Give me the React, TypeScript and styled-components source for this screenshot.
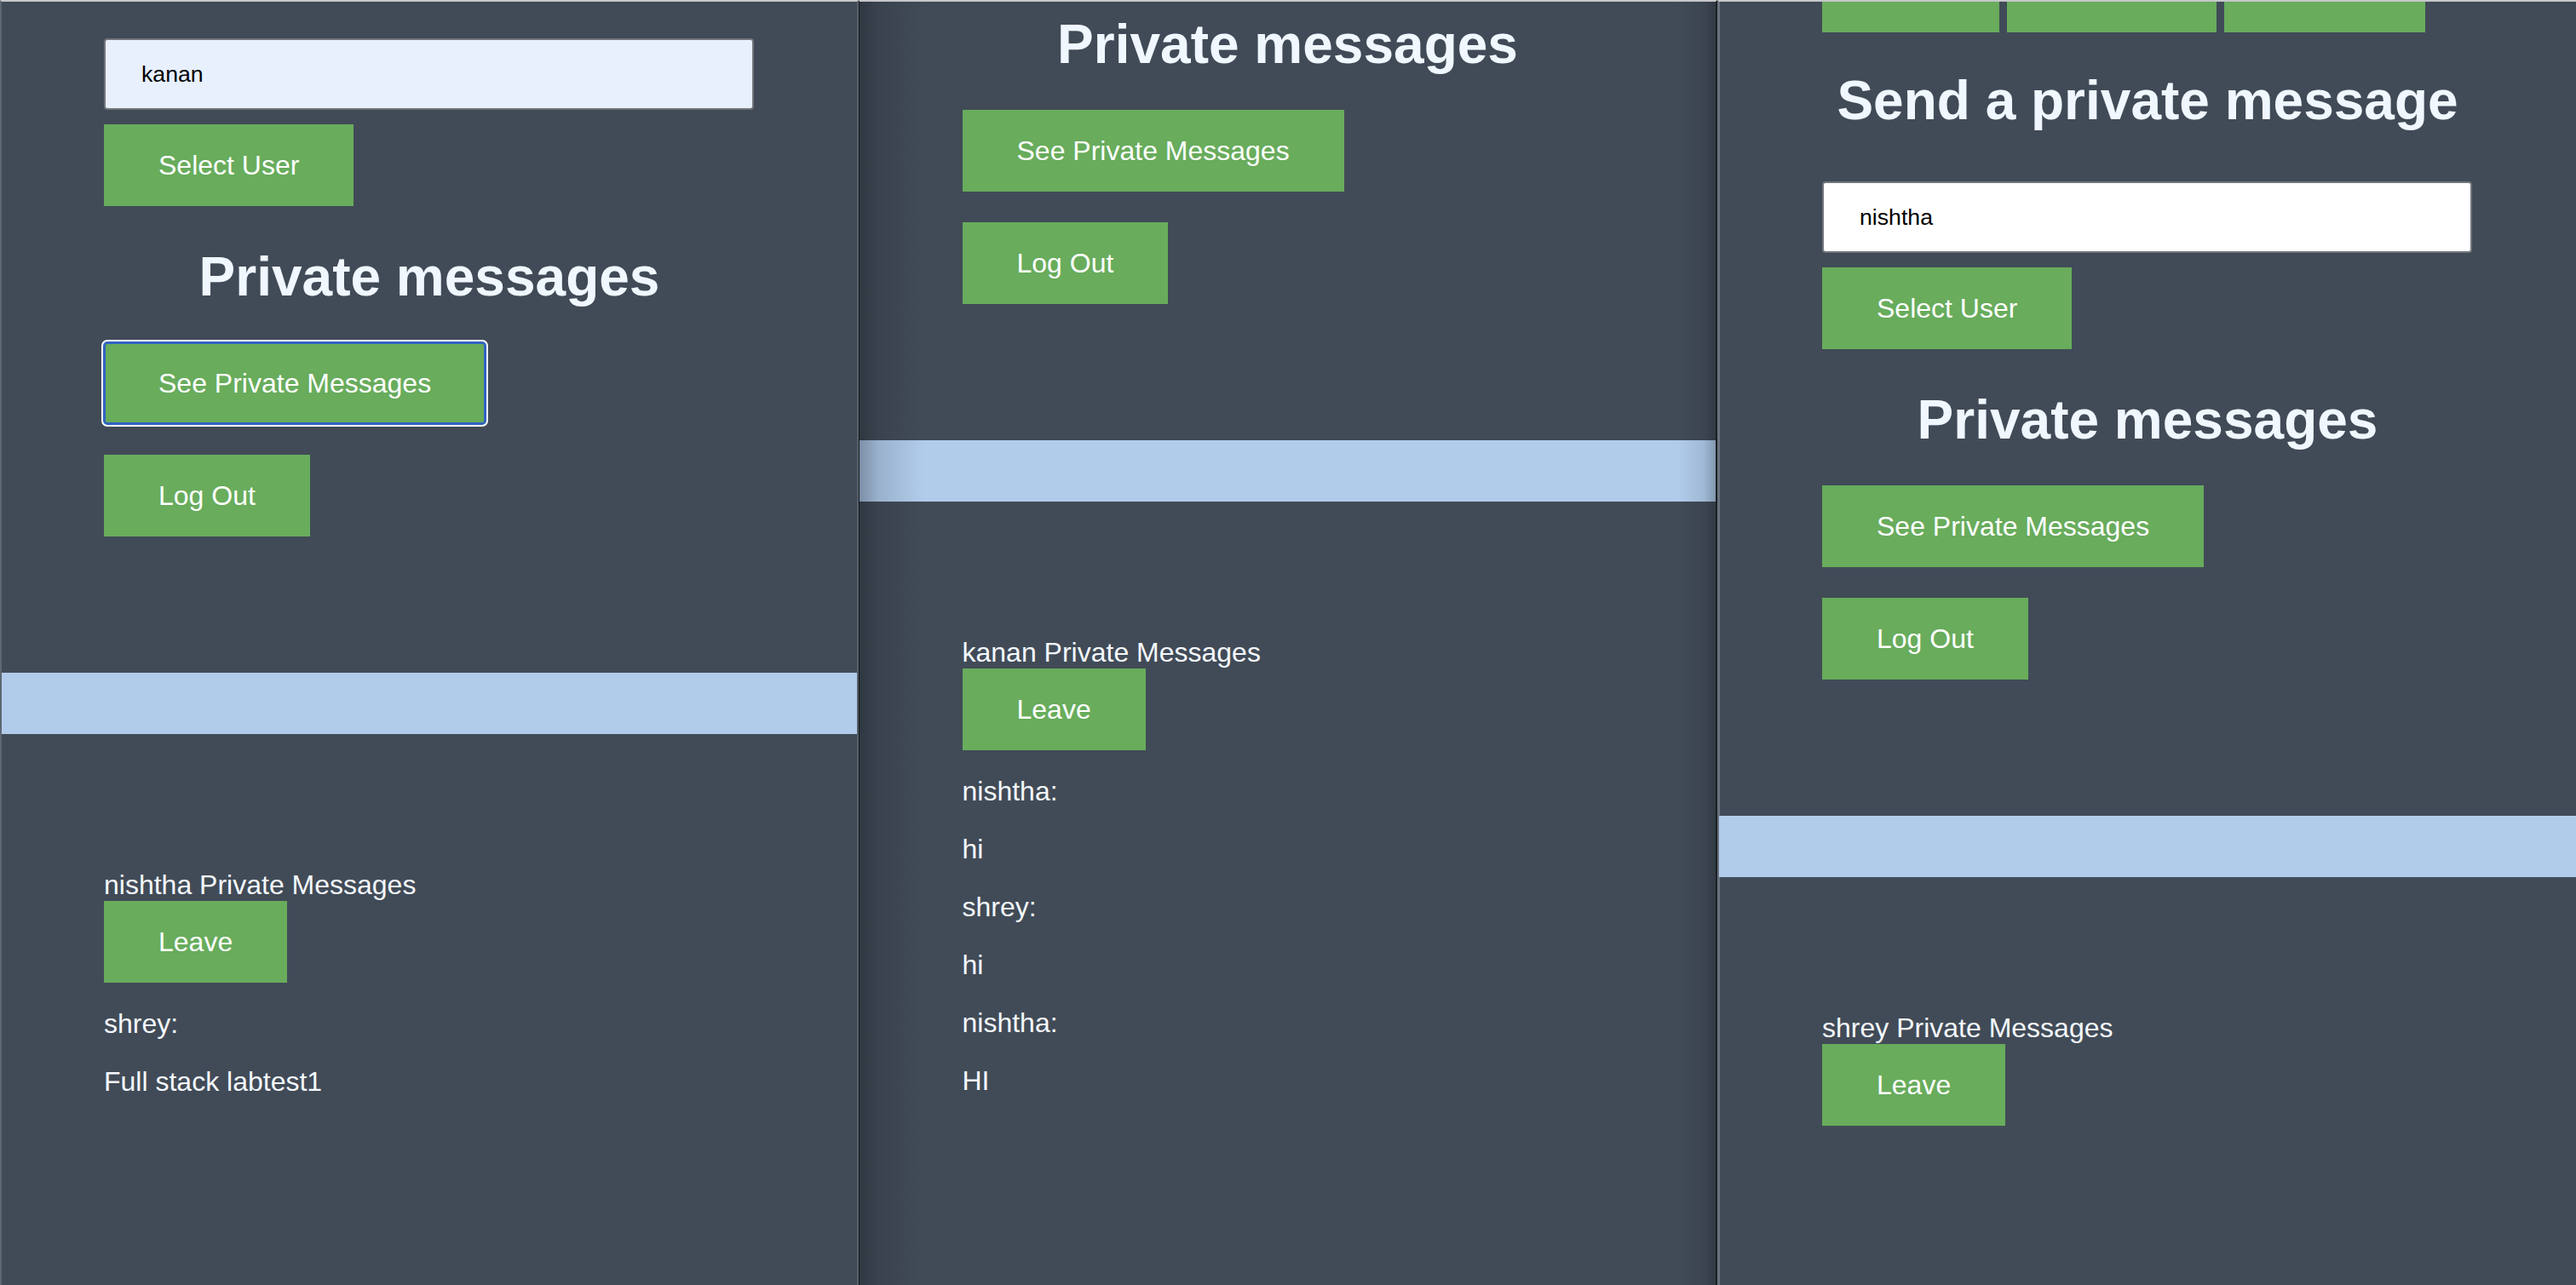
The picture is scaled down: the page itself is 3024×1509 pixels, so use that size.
import React from "react";
import styled, { createGlobalStyle, css } from "styled-components";

const GlobalStyle = createGlobalStyle`
  html, body {
    margin: 0;
    padding: 0;
    background: #414b57;
  }
  body {
    font-family: "Liberation Sans", Arial, Helvetica, sans-serif;
  }
  * { box-sizing: border-box; }
`;

const Screen = styled.main`
  display: flex;
  width: 3024px;
  height: 1509px;
  overflow: hidden;
`;

type Edge = "first" | "middle" | "last";

const Panel = styled.section<{ $edge: Edge }>`
  position: relative;
  flex: 0 0 1008px;
  height: 1509px;
  overflow: hidden;
  background: #414b57;
  border-top: 2px solid #c5c7ca;
  ${(p) =>
    p.$edge === "first" &&
    css`
      border-left: 2px solid #5d6672;
      border-right: 2px solid #56606b;
    `}
  ${(p) =>
    p.$edge === "middle" &&
    css`
      border-left: 1px solid #14171b;
      border-right: 2px solid #1b1f24;
      &::after {
        content: "";
        position: absolute;
        inset: 0;
        pointer-events: none;
        background:
          linear-gradient(to right, rgba(10, 14, 20, 0.32) 0px, rgba(10, 14, 20, 0.14) 22px, rgba(10, 14, 20, 0) 75px),
          linear-gradient(to left, rgba(10, 14, 20, 0.28) 0px, rgba(10, 14, 20, 0.1) 14px, rgba(10, 14, 20, 0) 45px);
      }
    `}
  ${(p) =>
    p.$edge === "last" &&
    css`
      border-left: 2px solid #68717d;
      box-shadow: inset 1px 0 0 #6c7581;
    `}
`;

const Page = styled.div`
  display: flex;
  flex-direction: column;
`;

const Container = styled.div`
  width: 764px;
  margin: 0 auto;
  display: flex;
  flex-direction: column;
  align-items: flex-start;
`;

const RoomRow = styled.div`
  display: flex;
  gap: 9px;
`;

const RoomTab = styled.button<{ $width: number }>`
  width: ${(p) => p.$width}px;
  height: 36px;
  padding: 0;
  border: none;
  background: #68ac5c;
  cursor: pointer;
`;

const Heading = styled.h1<{ $gap: number }>`
  align-self: stretch;
  margin: ${(p) => p.$gap}px 0 0;
  font-size: 64px;
  line-height: 72px;
  font-weight: 700;
  text-align: center;
  color: #f0f7ff;
`;

const UserInput = styled.input<{ $gap: number; $autofilled?: boolean }>`
  margin-top: ${(p) => p.$gap}px;
  width: 763px;
  height: 84px;
  padding: 0 42px;
  border: 2px solid #72767b;
  border-radius: 4px;
  background: ${(p) => (p.$autofilled ? "#e8f0fe" : "#ffffff")};
  color: #000;
  font-family: "Liberation Sans", Arial, Helvetica, sans-serif;
  font-size: 26.67px;
  outline: none;
`;

const Button = styled.button<{ $gap?: number; $focused?: boolean }>`
  display: block;
  flex: none;
  margin: ${(p) => p.$gap ?? 0}px 0 0;
  height: 96px;
  padding: 0 64px;
  border: none;
  background: #68ac5c;
  color: #ffffff;
  font-family: "Liberation Sans", Arial, Helvetica, sans-serif;
  font-size: 32px;
  line-height: 1;
  white-space: nowrap;
  cursor: pointer;
  ${(p) =>
    p.$focused &&
    css`
      border-radius: 4px;
      box-shadow: inset 0 0 0 2px #3163c3, 0 0 0 1px #3163c3, 0 0 0 3px #ffffff;
    `}
`;

const Divider = styled.div`
  margin-top: 160px;
  height: 72px;
  background: #b1cceb;
`;

const ChatTitle = styled.div`
  margin-top: 159px;
  font-size: 32px;
  line-height: 37px;
  color: #f4f8fd;
  white-space: nowrap;
`;

const MessageList = styled.div`
  margin-top: 30px;
  display: flex;
  flex-direction: column;
  gap: 31px;
`;

const MessageLine = styled.p`
  margin: 0;
  font-size: 32px;
  line-height: 37px;
  color: #f4f8fd;
`;

type PanelData = {
  edge: Edge;
  start: "rooms" | "picker" | "private";
  inputValue: string;
  autofilled: boolean;
  focusSee: boolean;
  chatWith: string;
  messages: string[];
};

const panels: PanelData[] = [
  {
    edge: "first",
    start: "picker",
    inputValue: "kanan",
    autofilled: true,
    focusSee: true,
    chatWith: "nishtha",
    messages: ["shrey:", "Full stack labtest1"],
  },
  {
    edge: "middle",
    start: "private",
    inputValue: "kanan",
    autofilled: false,
    focusSee: false,
    chatWith: "kanan",
    messages: ["nishtha:", "hi", "shrey:", "hi", "nishtha:", "HI"],
  },
  {
    edge: "last",
    start: "rooms",
    inputValue: "nishtha",
    autofilled: false,
    focusSee: false,
    chatWith: "shrey",
    messages: [],
  },
];

const roomTabs = [
  { label: "News", width: 208 },
  { label: "Hobbies", width: 246 },
  { label: "nodeJS", width: 236 },
];

function ChatPage({ data }: { data: PanelData }) {
  const showRooms = data.start === "rooms";
  const showPicker = data.start !== "private";
  return (
    <Panel $edge={data.edge}>
      <Page>
        <Container>
          {showRooms && (
            <>
              <RoomRow>
                {roomTabs.map((r) => (
                  <RoomTab key={r.label} $width={r.width} aria-label={r.label} />
                ))}
              </RoomRow>
              <Heading $gap={44}>Send a private message</Heading>
            </>
          )}
          {showPicker && (
            <>
              <UserInput
                type="text"
                defaultValue={data.inputValue}
                $gap={showRooms ? 59 : 43}
                $autofilled={data.autofilled}
                readOnly
              />
              <Button $gap={17}>Select User</Button>
            </>
          )}
          <Heading $gap={showPicker ? 47 : 14}>Private messages</Heading>
          <Button $gap={41} $focused={data.focusSee}>
            See Private Messages
          </Button>
          <Button $gap={36}>Log Out</Button>
        </Container>
        <Divider />
        <Container>
          <ChatTitle>{data.chatWith} Private Messages</ChatTitle>
          <Button>Leave</Button>
          {data.messages.length > 0 && (
            <MessageList>
              {data.messages.map((m, i) => (
                <MessageLine key={i}>{m}</MessageLine>
              ))}
            </MessageList>
          )}
        </Container>
      </Page>
    </Panel>
  );
}

export default function App() {
  return (
    <>
      <GlobalStyle />
      <Screen>
        {panels.map((p, i) => (
          <ChatPage key={i} data={p} />
        ))}
      </Screen>
    </>
  );
}
